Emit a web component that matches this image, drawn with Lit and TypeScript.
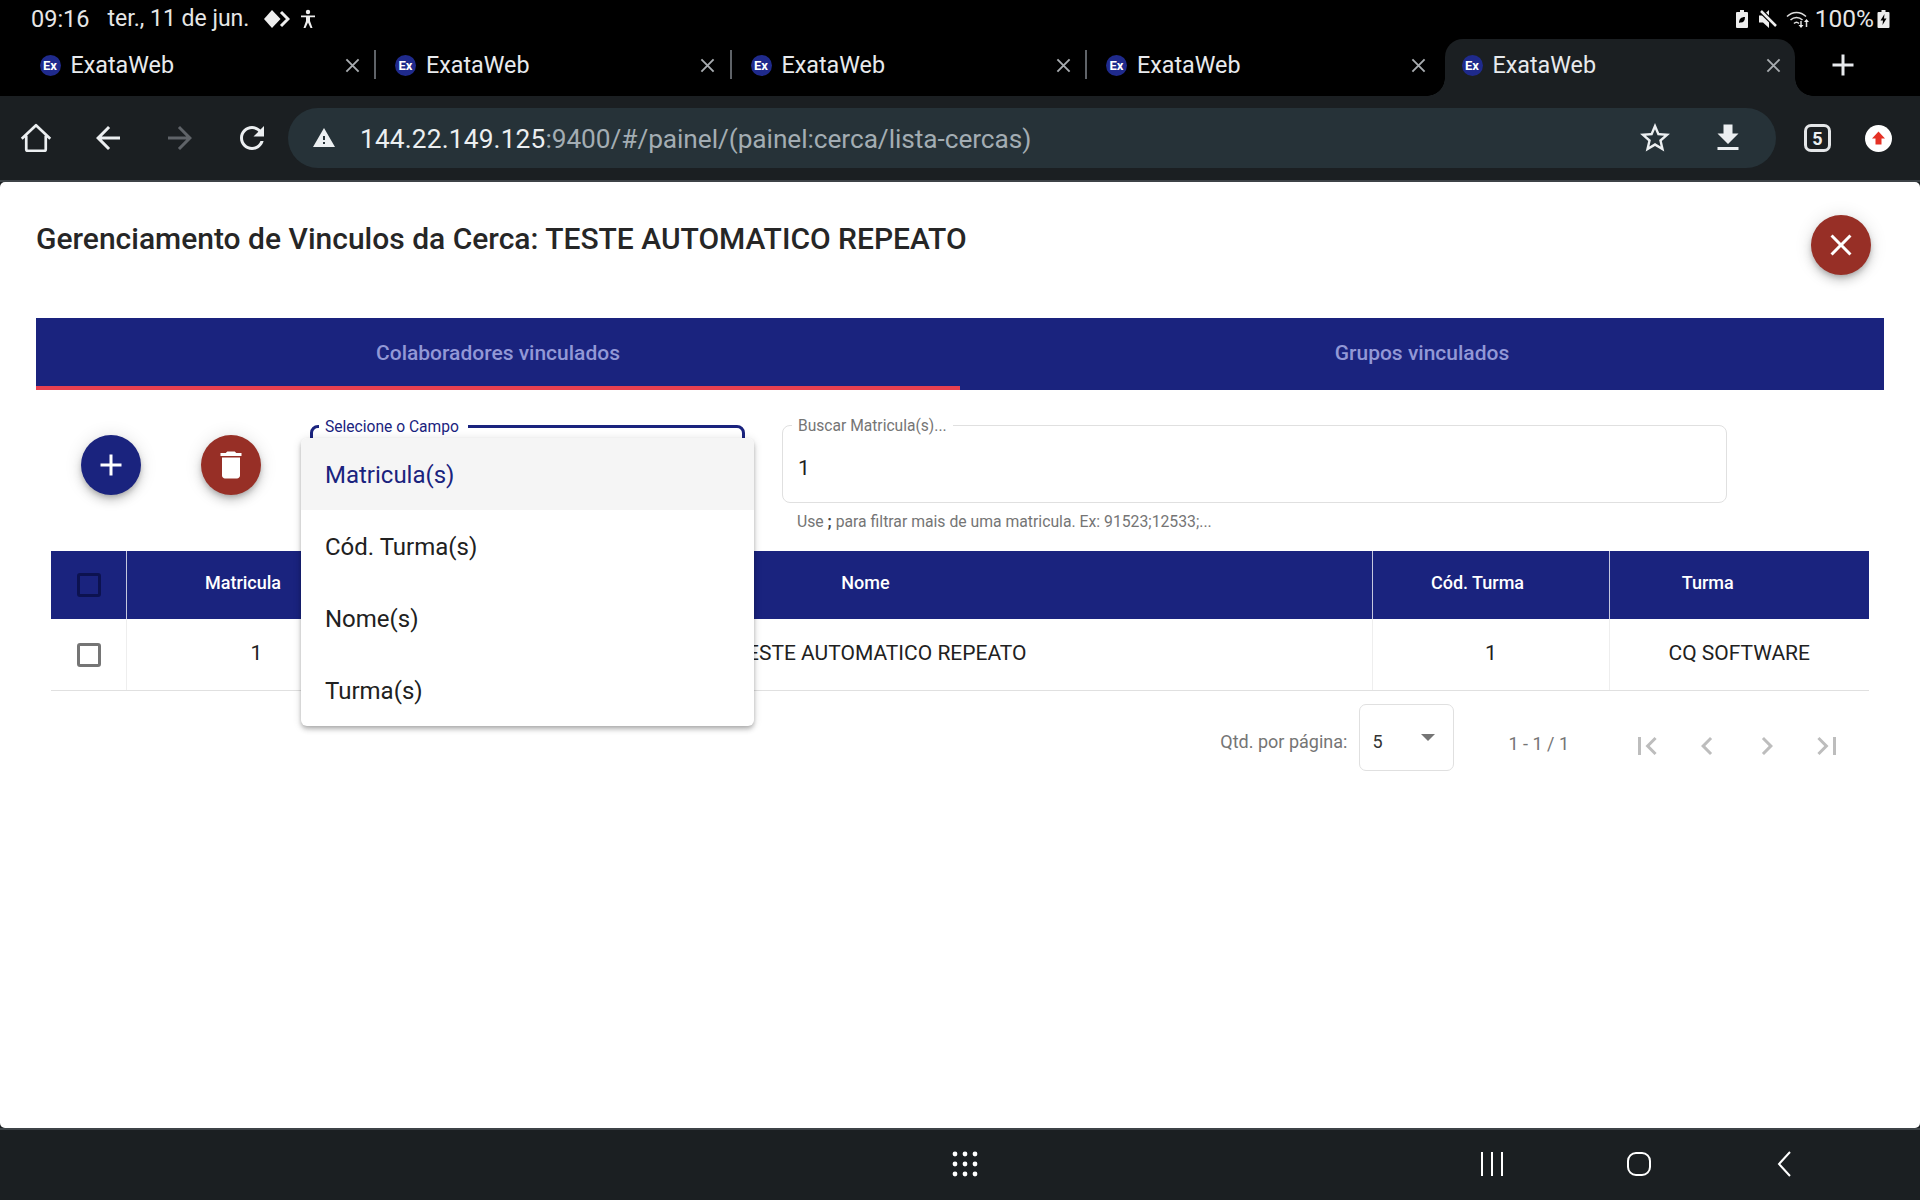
import { LitElement, html, css, svg } from 'lit';
import { customElement } from 'lit/decorators.js';

const icon = (d: string, cls = '') => html`<svg class="icon ${cls}" viewBox="0 0 24 24"><path d=${d}></path></svg>`;

const ICONS = {
  back: 'M20 11H7.83l5.59-5.59L12 4l-8 8 8 8 1.41-1.41L7.83 13H20v-2z',
  forward: 'M12 4l-1.41 1.41L16.17 11H4v2h12.17l-5.58 5.59L12 20l8-8z',
  reload: 'M17.65 6.35C16.2 4.9 14.21 4 12 4c-4.42 0-7.99 3.58-7.99 8s3.57 8 7.99 8c3.73 0 6.84-2.55 7.73-6h-2.08c-.82 2.33-3.04 4-5.65 4-3.31 0-6-2.69-6-6s2.69-6 6-6c1.66 0 3.14.69 4.22 1.78L13 11h7V4l-2.35 2.35z',
  warning: 'M1 21h22L12 2 1 21zm12-3h-2v-2h2v2zm0-4h-2v-4h2v4z',
  star: 'M22 9.24l-7.19-.62L12 2 9.19 8.63 2 9.24l5.46 4.73L5.82 21 12 17.27 18.18 21l-1.63-7.03L22 9.24zM12 15.4l-3.76 2.27 1-4.28-3.32-2.88 4.38-.38L12 6.1l1.71 4.04 4.38.38-3.32 2.88 1 4.28L12 15.4z',
  download: 'M19 9h-4V3H9v6H5l7 7 7-7zM5 18v2h14v-2H5z',
  close: 'M19 6.41L17.59 5 12 10.59 6.41 5 5 6.41 10.59 12 5 17.59 6.41 19 12 13.41 17.59 19 19 17.59 13.41 12z',
  add: 'M19 13h-6v6h-2v-6H5v-2h6V5h2v6h6v2z',
  trash: 'M6 19c0 1.1.9 2 2 2h8c1.1 0 2-.9 2-2V7H6v12zM19 4h-3.5l-1-1h-5l-1 1H5v2h14V4z',
  first: 'M18.41 16.59L13.82 12l4.59-4.59L17 6l-6 6 6 6zM6 6h2v12H6z',
  prev: 'M15.41 7.41L14 6l-6 6 6 6 1.41-1.41L10.83 12z',
  next: 'M10 6L8.59 7.41 13.17 12l-4.58 4.59L10 18l6-6z',
  last: 'M5.59 7.41L10.18 12l-4.59 4.59L7 18l6-6-6-6zM16 6h2v12h-2z',
};

const TABS = [0, 1, 2, 3, 4];
const FIELDS = ['Matricula(s)', 'Cód. Turma(s)', 'Nome(s)', 'Turma(s)'];

@customElement('app-root')
export class AppRoot extends LitElement {
  static styles = css`
    :host {
      display: flex;
      flex-direction: column;
      height: 1200px;
      background: #1b1f22;
      font-family: Roboto, 'Noto Sans', sans-serif;
      color: #212121;
      overflow: hidden;
    }
    .icon { width: 36px; height: 36px; fill: currentColor; display: block; flex: none; }

    /* android status bar */
    .status {
      height: 39px;
      background: #000;
      color: #e6e6e6;
      display: flex;
      align-items: center;
      font-size: 23px;
      padding: 0 30px 2px 31px;
      box-sizing: border-box;
    }
    .status .time { font-size: 23.5px; }
    .status .date { margin-left: 18px; }
    .status svg { display: block; flex: none; fill: #eee; }
    .status .diamond { margin-left: 15px; }
    .status .person { margin-left: 10px; }
    .status .spacer { flex: 1; }
    .status .mute { margin-left: 11px; }
    .status .wifi { margin-left: 9px; }
    .status .pct { margin: 0 3px 0 5px; font-size: 24.5px; }

    /* chrome tabs */
    .strip {
      height: 57px;
      background: #000;
      display: flex;
      padding-left: 23px;
      color: #e8eaed;
    }
    .tab {
      width: 355.5px;
      flex: none;
      display: flex;
      align-items: center;
      padding: 0 0 5px 16.5px;
      box-sizing: border-box;
      font-size: 23.3px;
      position: relative;
    }
    .tab.active {
      width: 350px;
      background: #1b1f22;
      border-radius: 18px 18px 0 0;
    }
    .tab.active::before, .tab.active::after {
      content: '';
      position: absolute;
      bottom: 0;
      width: 18px;
      height: 18px;
    }
    .tab.active::before { left: -18px; background: radial-gradient(circle at 0 0, #000 17.5px, #1b1f22 18px); }
    .tab.active::after { right: -18px; background: radial-gradient(circle at 100% 0, #000 17.5px, #1b1f22 18px); }
    .tab .sep {
      position: absolute;
      left: 351px;
      top: 11px;
      width: 2px;
      height: 29px;
      background: #5f6368;
    }
    .favicon {
      width: 21px;
      height: 21px;
      border-radius: 50%;
      background: #1f2a8c;
      color: #fff;
      font-size: 13px;
      font-weight: 700;
      display: flex;
      align-items: center;
      justify-content: center;
      margin-right: 10px;
      flex: none;
    }
    .tab-title { flex: 1; }
    .tab-close { width: 15px; height: 15px; stroke: #a8acb0; stroke-width: 2; fill: none; margin-right: 19px; flex: none; }
    .tab.active .tab-close { margin-right: 14px; }
    .new-tab { margin: 8px 0 0 30px; color: #e8eaed; }

    /* chrome toolbar */
    .toolbar {
      height: 86px;
      box-sizing: border-box;
      background: #1b1f22;
      border-bottom: 2px solid #3d4347;
      display: flex;
      align-items: flex-start;
      padding: 12px 0 0 18px;
      color: #eceff1;
    }
    .nav-btn { margin: 12px 36px 0 0; }
    .nav-btn.off { color: #5f6368; }
    .nav-btn.reload { margin-right: 18px; }
    .home { fill: none; }
    .home path { fill: none; stroke: currentColor; stroke-width: 1.8; stroke-linejoin: round; }
    .omnibox {
      width: 1488px;
      height: 60px;
      background: #263238;
      border-radius: 30px;
      display: flex;
      align-items: center;
      padding: 0 30px 0 24px;
      box-sizing: border-box;
      flex: none;
    }
    .omnibox .warn { width: 24px; height: 24px; margin-right: 24px; }
    .url { flex: 1; font-size: 26.25px; color: #eceff1; white-space: nowrap; padding-top: 1px; letter-spacing: .17px; }
    .url span { color: #a3adb3; letter-spacing: -.06px; }
    .omnibox .star { margin-right: 37px; }
    .tab-count {
      width: 27px;
      height: 28px;
      border: 3px solid #e4e6e8;
      border-radius: 7px;
      box-sizing: border-box;
      margin: 16px 34px 0 28px;
      font-size: 18px;
      font-weight: 700;
      display: flex;
      align-items: center;
      justify-content: center;
    }
    .avatar { width: 27px; height: 27px; margin-top: 17px; display: block; }

    /* page */
    .page {
      flex: 1;
      background: #fff;
      border-radius: 5px;
      padding: 0 36px;
      position: relative;
    }
    .head {
      height: 136px;
      box-sizing: border-box;
      padding: 33px 13.5px 0 0;
      display: flex;
      justify-content: space-between;
      align-items: flex-start;
    }
    .head h1 { margin: 0; font-size: 30px; line-height: 48px; font-weight: 500; color: #262626; }
    .fab {
      width: 60px;
      height: 60px;
      border: 0;
      padding: 0;
      border-radius: 50%;
      color: #fff;
      display: flex;
      align-items: center;
      justify-content: center;
      flex: none;
      box-shadow: 0 3px 5px -1px rgba(0,0,0,.2), 0 6px 10px 0 rgba(0,0,0,.14), 0 1px 18px 0 rgba(0,0,0,.12);
    }
    .fab.red { background: #972f26; }
    .fab.navy { background: #1a237e; }

    .tabs {
      height: 72px;
      background: #1a237e;
      display: grid;
      grid-template-columns: 1fr 1fr;
    }
    .tabs div {
      display: flex;
      align-items: center;
      justify-content: center;
      color: #9298d6;
      font-size: 21px;
      font-weight: 500;
      padding-bottom: 3px;
      box-sizing: border-box;
    }
    .tabs .on { box-shadow: inset 0 -4px 0 #e84050; }

    .filters {
      height: 161px;
      box-sizing: border-box;
      padding: 35px 0 0 45px;
      display: flex;
      align-items: flex-start;
    }
    .filters .fab { margin-top: 10px; }
    .filters .fab.navy { margin-right: 60px; }
    .select-field {
      width: 435px;
      height: 77px;
      margin: 0 37px 0 49px;
      border: 3px solid #1a237e;
      border-radius: 8px;
      box-sizing: border-box;
      position: relative;
      flex: none;
    }
    .select-field label, .input-field label {
      position: absolute;
      left: 9px;
      top: -9px;
      background: #fff;
      padding: 0 6px;
      font-size: 15.6px;
      line-height: 18px;
    }
    .select-field label { color: #1a237e; top: -10px; left: 6px; padding: 0 9px 0 6px; }
    .panel {
      position: absolute;
      left: -12px;
      top: 10px;
      width: 453px;
      background: #fff;
      border-radius: 6px;
      z-index: 5;
      overflow: hidden;
      box-shadow: 0 2px 4px -1px rgba(0,0,0,.2), 0 4px 5px 0 rgba(0,0,0,.14), 0 1px 10px 0 rgba(0,0,0,.12);
    }
    .panel div {
      height: 72px;
      line-height: 74px;
      padding-left: 24px;
      font-size: 24px;
      color: #212121;
    }
    .panel .sel { background: #f5f5f5; color: #1a237e; }
    .input-wrap { width: 945px; flex: none; }
    .input-field {
      height: 78px;
      border: 1px solid #e0e0e0;
      border-radius: 8px;
      box-sizing: border-box;
      position: relative;
      font-size: 21px;
      padding: 29px 0 0 15px;
      line-height: 26px;
    }
    .input-field label { color: #757575; }
    .hint { font-size: 15.75px; color: #757575; padding: 10px 0 0 15px; line-height: 18px; }
    .hint b { font-weight: 700; color: #444; }

    .table { margin: 0 15.5px 0 15px; }
    .t-row { display: grid; grid-template-columns: 75px 262px 984px 237px 1fr; }
    .t-head { height: 68px; background: #1a237e; color: #fff; font-size: 18px; font-weight: 500; }
    .t-body { height: 72px; border-bottom: 1px solid #e0e0e0; box-sizing: border-box; font-size: 21px; color: #212121; }
    .cell {
      display: flex;
      align-items: center;
      justify-content: center;
      box-sizing: border-box;
      padding-bottom: 3px;
    }
    .t-head .cell { padding-bottom: 5px; }
    .t-head .cell + .cell { border-left: 1px solid rgba(255,255,255,.75); }
    .t-body .cell + .cell { border-left: 1px solid #eee; }
    .t-head .c1 { padding-right: 29px; }
    .t-head .c2 { padding-right: 30px; }
    .t-head .c3 { padding-right: 27px; }
    .t-head .c4 { padding-right: 63px; }
    .t-body .c1 { padding-right: 2px; }
    .check { width: 24px; height: 24px; border: 3px solid #757575; border-radius: 3px; box-sizing: border-box; }
    .t-head .check { border-color: #0c1250; margin-top: 5px; }
    .t-body .check { margin-top: 4px; }

    .pager {
      display: flex;
      align-items: flex-start;
      justify-content: flex-end;
      padding: 13px 11.5px 0 0;
      margin: 0 15.5px 0 15px;
      font-size: 18px;
      color: #757575;
    }
    .pager .lbl { line-height: 22px; margin-top: 27px; }
    .size-box {
      width: 95px;
      height: 67px;
      border: 1px solid #e0e0e0;
      border-radius: 7px;
      box-sizing: border-box;
      margin: 0 54px 0 12px;
      padding: 26px 0 0 12px;
      line-height: 22px;
      color: #333;
      position: relative;
    }
    .size-box i {
      position: absolute;
      left: 61px;
      top: 29px;
      border: 7.5px solid transparent;
      border-top-color: #757575;
      border-bottom: 0;
    }
    .pager .range { line-height: 22px; margin: 29px 48px 0 0; }
    .pager .pg { color: #bdbdbd; margin-top: 24px; width: 60px; display: flex; justify-content: center; }

    /* android nav bar */
    .navbar {
      height: 72px;
      background: #1b1f22;
      border-top: 2px solid #3d4347;
      box-sizing: border-box;
      display: flex;
      align-items: flex-start;
      padding: 21px 0 0 952px;
    }
    .navbar svg { display: block; flex: none; stroke: #fff; fill: none; stroke-width: 2; }
    .navbar .dots { stroke: none; fill: #fff; }
    .navbar .recents { margin-left: 502px; }
    .navbar .home-btn { margin-left: 122px; }
    .navbar .back-btn { margin-left: 124px; }
  `;

  render() {
    return html`
      <div class="status">
        <span class="time">09:16</span><span class="date">ter., 11 de jun.</span>
        <svg class="diamond" width="26" height="18" viewBox="0 0 26 18">
          <path d="M8 0l8.500 9-8.500 9-8-9z"></path>
          <path d="M17 2l7 7-7 7" fill="none" stroke="#eee" stroke-width="3"></path>
        </svg>
        <svg class="person" width="16" height="20" viewBox="0 0 16 20">
          <circle cx="8" cy="3" r="2.2"></circle>
          <path d="M1 6.5h14v1.8H10V12l2.5 7h-2L8 13.5 5.5 19h-2L6 12V8.3H1z"></path>
        </svg>
        <span class="spacer"></span>
        <svg width="12" height="18" viewBox="0 0 12 18">
          <path d="M4 0h4v2h3a1 1 0 0 1 1 1v14a1 1 0 0 1-1 1H1a1 1 0 0 1-1-1V3a1 1 0 0 1 1-1h3z"></path>
          <path d="M3 13c0-4 2-6 6-6 0 4-2 6-5 5.500z" fill="#000"></path>
        </svg>
        <svg class="mute" width="18" height="18" viewBox="0 0 18 18">
          <path d="M0 5.500h4L10 0v18l-6-5.500H0z"></path>
          <path d="M2 1l15 15" stroke="#000" stroke-width="5"></path>
          <path d="M2 1l15 15" stroke="#eee" stroke-width="2.500"></path>
        </svg>
        <svg class="wifi" width="24" height="18" viewBox="0 0 24 18" fill="none">
          <g fill="none" stroke="#ddd" stroke-width="1.500">
            <path d="M1 6.500c5.500-5.500 13.500-5.500 19 0"></path>
            <path d="M4.500 10c3.500-3.500 8.500-3.500 12 0"></path>
            <path d="M8 13.500c1.500-1.500 3.500-1.500 5 0"></path>
            <path d="M15 11v6M20.500 11v6"></path>
          </g>
          <path d="M20.500 9l2.500 3h-5zM15 18l-2.500-3h5z"></path>
        </svg>
        <span class="pct">100%</span>
        <svg width="13" height="18" viewBox="0 0 13 18">
          <path d="M4.500 0h4v2h3a1 1 0 0 1 1 1v14a1 1 0 0 1-1 1h-10a1 1 0 0 1-1-1V3a1 1 0 0 1 1-1h3z"></path>
          <path d="M7.500 4L3.500 10.500h2.500L5.500 15l4-6.500H7z" fill="#000"></path>
        </svg>
      </div>

      <div class="strip">
        ${TABS.map(i => html`
          <div class="tab ${i === 4 ? 'active' : ''}">
            <span class="favicon">Ex</span>
            <span class="tab-title">ExataWeb</span>
            <svg class="tab-close" viewBox="0 0 16 16"><path d="M1.500 1.500l13 13M14.500 1.500l-13 13"></path></svg>
            ${i < 3 ? html`<span class="sep"></span>` : ''}
          </div>
        `)}
        ${icon(ICONS.add, 'new-tab')}
      </div>

      <div class="toolbar">
        <svg class="icon nav-btn home" viewBox="0 0 24 24">
          <path d="M2.500 12.500L12 3.500l9.500 9M5.500 10.500v9a1 1 0 0 0 1 1h11a1 1 0 0 0 1-1v-9"></path>
        </svg>
        ${icon(ICONS.back, 'nav-btn')}
        ${icon(ICONS.forward, 'nav-btn off')}
        ${icon(ICONS.reload, 'nav-btn reload')}
        <div class="omnibox">
          ${icon(ICONS.warning, 'warn')}
          <div class="url">144.22.149.125<span>:9400/#/painel/(painel:cerca/lista-cercas)</span></div>
          ${icon(ICONS.star, 'star')}
          ${icon(ICONS.download)}
        </div>
        <div class="tab-count">5</div>
        <svg class="avatar" viewBox="0 0 27 27">
          <circle cx="13.500" cy="13.500" r="13.500" fill="#fff"></circle>
          <path d="M13.500 6.500l6.500 7h-3.500v6h-6v-6H7z" fill="#e53125"></path>
        </svg>
      </div>

      <div class="page">
        <div class="head">
          <h1>Gerenciamento de Vinculos da Cerca: TESTE AUTOMATICO REPEATO</h1>
          <button class="fab red">${icon(ICONS.close)}</button>
        </div>

        <div class="tabs">
          <div class="on">Colaboradores vinculados</div>
          <div>Grupos vinculados</div>
        </div>

        <div class="filters">
          <button class="fab navy">${icon(ICONS.add)}</button>
          <button class="fab red">${icon(ICONS.trash)}</button>
          <div class="select-field">
            <label>Selecione o Campo</label>
            <div class="panel">
              ${FIELDS.map((f, i) => html`<div class=${i === 0 ? 'sel' : ''}>${f}</div>`)}
            </div>
          </div>
          <div class="input-wrap">
            <div class="input-field"><label>Buscar Matricula(s)...</label>1</div>
            <div class="hint">Use <b>;</b> para filtrar mais de uma matricula. Ex: 91523;12533;...</div>
          </div>
        </div>

        <div class="table">
          <div class="t-row t-head">
            <div class="cell"><span class="check"></span></div>
            <div class="cell c1">Matricula</div>
            <div class="cell c2">Nome</div>
            <div class="cell c3">Cód. Turma</div>
            <div class="cell c4">Turma</div>
          </div>
          <div class="t-row t-body">
            <div class="cell"><span class="check"></span></div>
            <div class="cell c1">1</div>
            <div class="cell">TESTE AUTOMATICO REPEATO</div>
            <div class="cell">1</div>
            <div class="cell">CQ SOFTWARE</div>
          </div>
        </div>

        <div class="pager">
          <span class="lbl">Qtd. por página:</span>
          <div class="size-box">5<i></i></div>
          <span class="range">1 - 1 / 1</span>
          <span class="pg">${icon(ICONS.first)}</span>
          <span class="pg">${icon(ICONS.prev)}</span>
          <span class="pg">${icon(ICONS.next)}</span>
          <span class="pg">${icon(ICONS.last)}</span>
        </div>
      </div>

      <div class="navbar">
        <svg class="dots" width="26" height="26" viewBox="0 0 26 26">
          ${[3, 13, 23].map(y => [3, 13, 23].map(x => svg`<circle cx=${x} cy=${y} r="2.400"></circle>`))}
        </svg>
        <svg class="recents" width="24" height="26" viewBox="0 0 24 26"><path d="M2 1v24M12 1v24M22 1v24"></path></svg>
        <svg class="home-btn" width="26" height="26" viewBox="0 0 26 26"><rect x="2" y="2" width="22" height="22" rx="8"></rect></svg>
        <svg class="back-btn" width="16" height="26" viewBox="0 0 16 26"><path d="M14 1L3 13l11 12"></path></svg>
      </div>
    `;
  }
}
